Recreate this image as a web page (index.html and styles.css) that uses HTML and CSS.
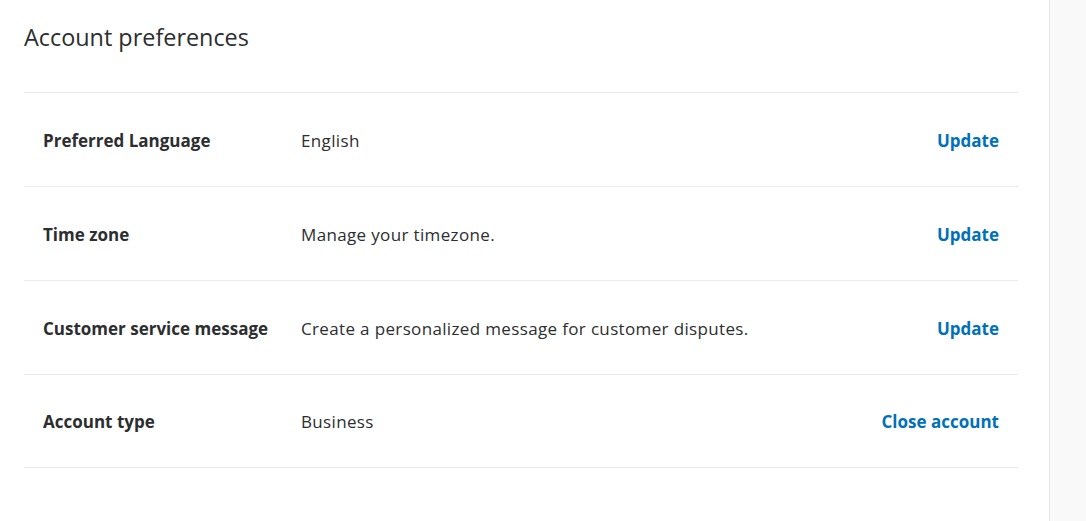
FILE: index.html
```html
<!DOCTYPE html>
<html lang="en">
<head>
<meta charset="utf-8">
<title>Account preferences</title>
<link rel="stylesheet" href="styles.css">
</head>
<body>
<div class="layout">
  <main class="main">
    <h1 class="title">Account preferences</h1>
    <ul class="prefs">
      <li class="row">
        <span class="label">Preferred Language</span>
        <span class="value">English</span>
        <a class="action" href="#">Update</a>
      </li>
      <li class="row">
        <span class="label">Time zone</span>
        <span class="value">Manage your timezone.</span>
        <a class="action" href="#">Update</a>
      </li>
      <li class="row">
        <span class="label">Customer service message</span>
        <span class="value">Create a personalized message for customer disputes.</span>
        <a class="action" href="#">Update</a>
      </li>
      <li class="row">
        <span class="label">Account type</span>
        <span class="value">Business</span>
        <a class="action" href="#">Close account</a>
      </li>
    </ul>
  </main>
  <aside class="side"></aside>
</div>
</body>
</html>
```
FILE: styles.css
```css
* { box-sizing: border-box; }
html, body { margin: 0; height: 100%; }
body {
  font-family: "Open Sans", "Noto Sans", "Liberation Sans", sans-serif;
  color: #2c2e2f;
  background: #fff;
}
.layout {
  display: flex;
  height: 100%;
}
.main {
  flex: 1;
  padding: 0 31px 0 24px;
}
.side {
  width: 37px;
  background: #f9f9f9;
  border-left: 1px solid #e6e6e6;
}
.title {
  margin: 0;
  padding-top: 21px;
  height: 92px;
  font-size: 23.4px;
  font-weight: 400;
  line-height: 32px;
}
.prefs {
  list-style: none;
  margin: 0;
  padding: 0;
  border-top: 1px solid #eaeaea;
}
.row {
  display: flex;
  align-items: center;
  height: 94px;
  padding: 1px 19px 0;
  border-bottom: 1px solid #eaeaea;
  font-size: 17px;
}
.row:last-child {
  height: 93px;
}
.label {
  width: 258px;
  font-weight: 700;
}
.value {
  flex: 1;
  letter-spacing: 0.35px;
}
.action {
  color: #0070ba;
  font-weight: 700;
  text-decoration: none;
}
```
